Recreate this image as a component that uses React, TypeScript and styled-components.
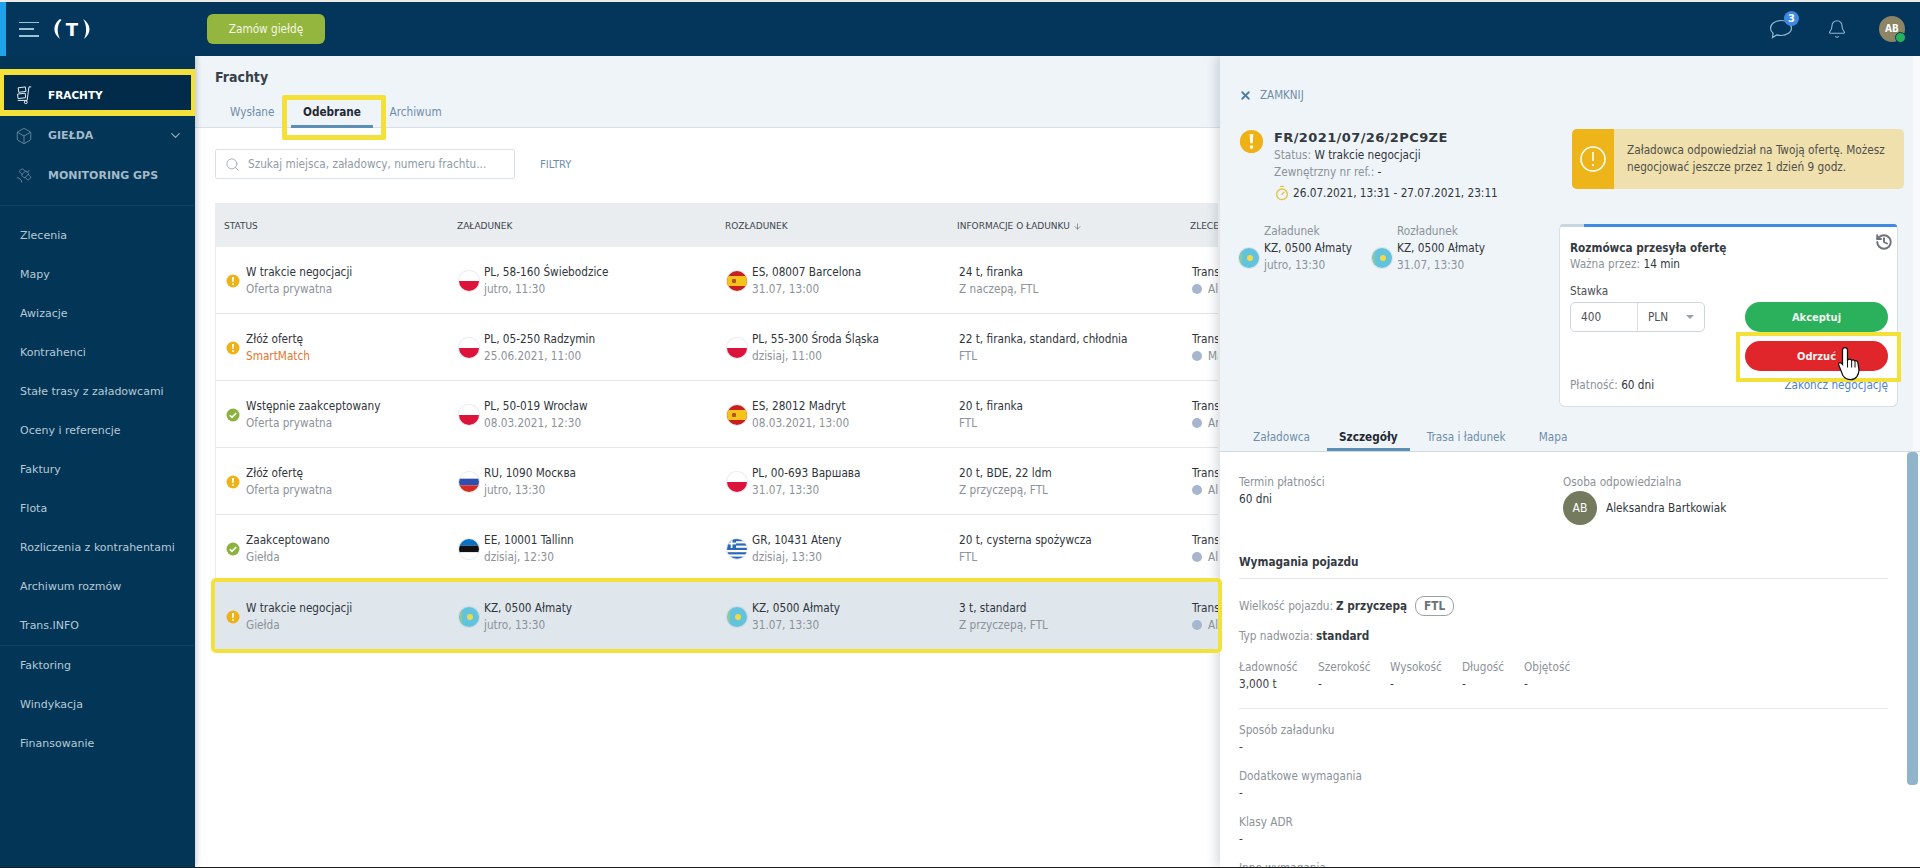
import React from "react";
import styled, { createGlobalStyle } from "styled-components";
import { Box, ChevronDown, Satellite, Search, ArrowDown, X, Timer, History, Bell } from "lucide-react";

const Global = createGlobalStyle`
  html, body { margin: 0; padding: 0; background: #fff; }
  * { box-sizing: border-box; }
  body { font-family: "DejaVu Sans", Verdana, sans-serif; font-size: 11px; color: #3a4046; }
`;

const Root = styled.div`
  width: 1920px; height: 868px; overflow: hidden; display: flex; flex-direction: column;
  border-top: 2px solid #ece9e6; border-bottom: 1px solid #1c1c1c; background: #fff;
`;
const TopBar = styled.header`
  height: 54px; flex: none; background: #03365a; display: flex; align-items: center; position: relative; z-index: 6;
`;
const BrandStrip = styled.div`width: 6px; height: 100%; background: #1ea3ea;`;
const Burger = styled.div`
  margin-left: 13px; width: 20px; height: 15px; display: flex; flex-direction: column; justify-content: space-between;
`;
const BurgerLine = styled.i<{ $w: number }>`display: block; height: 1.5px; width: ${p => p.$w}px; background: #9cc2d8;`;
const Logo = styled.svg`margin-left: 13px; width: 40px; height: 24px; flex: none;`;
const OrderButton = styled.button`
  margin-left: 115px; width: 118px; height: 30px; border: 0; border-radius: 6px; background: #95b63e; color: #f3f7e6;
  font: 400 11.7px "DejaVu Sans", sans-serif; font-stretch: condensed;
`;
const TopActions = styled.div`margin-left: auto; display: flex; align-items: center; padding-right: 15px;`;
const IconHolder = styled.div<{ $mr: number }>`position: relative; display: flex; margin-right: ${p => p.$mr}px; color: #8fb9d2;`;
const Badge = styled.span`
  position: absolute; top: -8px; right: -6px; width: 15px; height: 15px; border-radius: 50%; background: #3e8ae2; color: #fff;
  font: 700 10px/15px "DejaVu Sans", sans-serif; text-align: center;
`;
const UserAvatar = styled.div`
  position: relative; width: 26px; height: 26px; border-radius: 50%; background: #8d8563; color: #fff;
  font: 700 10px/26px "DejaVu Sans", sans-serif; font-stretch: condensed; text-align: center;
`;
const OnlineDot = styled.span`
  position: absolute; right: -1px; bottom: -1px; width: 11px; height: 11px; border-radius: 50%; background: #25b25c; border: 1.5px solid #03365a;
`;

const Body = styled.div`flex: 1; display: flex; min-height: 0;`;
const Sidebar = styled.nav`
  width: 195px; flex: none; background: #033656; padding-top: 13px; box-shadow: 2px 0 5px rgba(30,50,70,.22); position: relative; z-index: 5;
`;
const ActiveItem = styled.div`
  height: 47px; border: 6px solid #f3e13a; border-left-width: 4px; border-right-width: 4px; background: #022b49; display: flex; align-items: center;
  padding: 5px 0 0 11px; color: #fff; font-weight: 700; font-size: 10.5px; gap: 15px; position: relative;
`;
const MainItem = styled.div<{ $h: number }>`
  height: ${p => p.$h}px; display: flex; align-items: center; padding-left: 15px; color: #a4bac9; font-weight: 700; font-size: 11px; gap: 15px;
`;
const MainIcon = styled.span`display: flex; width: 18px; flex: none; justify-content: center;`;
const Chevron = styled.span`margin-left: auto; margin-right: 12px; display: flex;`;
const Divider = styled.hr<{ $mt?: number }>`margin: ${p => p.$mt ?? 0}px 0 0; border: 0; border-top: 1px solid #0d4266;`;
const SubList = styled.div<{ $pt: number }>`padding-top: ${p => p.$pt}px;`;
const SubItem = styled.div`height: 39px; line-height: 39px; padding-left: 20px; color: #b7c9d6; font-size: 11px; font-weight: 500;`;

const Main = styled.main`flex: 1; position: relative; min-width: 0; background: #fff;`;
const Head = styled.div`height: 72px; background: #eff4f8; border-bottom: 1px solid #d8e0e6; padding: 11px 0 0 20px; display: flex; flex-direction: column;`;
const PageTitle = styled.h1`margin: 0; font-size: 14px; line-height: 21px; font-weight: 700; color: #39404a; font-stretch: condensed;`;
const Tabs = styled.div<{ $gap: number }>`display: flex; gap: ${p => p.$gap}px;`;
const PageTabs = styled(Tabs)`margin: 11px 0 0 3px;`;
const Tab = styled.div<{ $active?: boolean; $h: number; $lh: number; $ml?: number }>`
  position: relative; flex: none; height: ${p => p.$h}px; padding: 0 12px; margin-left: ${p => p.$ml ?? 0}px; line-height: ${p => p.$lh}px; font-size: 11.7px; font-stretch: condensed;
  color: ${p => (p.$active ? "#1f2a33" : "#6f8eab")}; font-weight: ${p => (p.$active ? 700 : 400)};
  border-bottom: 3px solid ${p => (p.$active ? "#5b8fb5" : "transparent")};
`;
const TabFrame = styled.span`
  position: absolute; top: -4px; left: -9px; right: -13px; bottom: -15px; border: 5px solid #f3e13a; border-radius: 2px;
`;
const FilterRow = styled.div`display: flex; align-items: center; padding: 21px 0 0 20px;`;
const SearchBox = styled.div`
  width: 300px; height: 30px; background: #fff; border: 1px solid #d9e0e6; border-radius: 2px; display: flex; align-items: center; padding-left: 9px; gap: 8px;
  color: #8f9ca6; font-size: 11.7px; font-stretch: condensed; white-space: nowrap;
`;
const FilterLink = styled.span`margin-left: 25px; color: #6d8fae; font-size: 10px;`;

const Table = styled.div`width: 1003px; margin: 24px 0 0 20px;`;
const TableRow = styled.div`
  display: grid; grid-template-columns: 233px 268px 232px 233px 31px; padding-left: 9px; overflow: hidden;
`;
const TableHead = styled(TableRow)`height: 44px; padding-top: 2px; background: #e9edf0; align-items: center; font-size: 9px; color: #3f464d;`;
const HeadCell = styled.div`white-space: nowrap; display: flex; align-items: center; gap: 3px;`;
const DataRow = styled(TableRow)<{ $selected?: boolean }>`
  height: 67px; padding-top: 2px; align-items: center; border-left: 1px solid #e8ecef; border-bottom: 1px solid #e3e7ea; position: relative;
  ${p => p.$selected ? `padding-top: 4px; background: #dfe6ec; outline: 4px solid #f3e13a; outline-offset: 0; border-radius: 1px; z-index: 3; border-color: transparent;` : ""}
`;
const Cell = styled.div<{ $gap: number; $ml?: number }>`
  display: flex; align-items: center; gap: ${p => p.$gap}px; margin-left: ${p => p.$ml ?? 0}px; white-space: nowrap; min-width: 0;
`;
const Lines = styled.div`display: flex; flex-direction: column; line-height: 17px; font-size: 11.7px; font-stretch: condensed;`;
const Sub = styled.span<{ $accent?: boolean }>`color: ${p => (p.$accent ? "#e2762e" : "#8b9298")};`;
const Strong = styled.span`color: #2f353b;`;
const Dot = styled.i`width: 10px; height: 10px; border-radius: 50%; background: #a7b6cf; display: inline-block; margin-right: 6px; vertical-align: -1px;`;
const FlagWrap = styled.span`width: 20px; height: 20px; border-radius: 50%; overflow: hidden; flex: none; display: block; box-shadow: 0 0 0 1px rgba(170,180,190,.25);`;

const Drawer = styled.aside`
  position: absolute; left: 1025px; top: 0; bottom: 0; width: 700px; display: flex; flex-direction: column; box-shadow: -4px 0 10px rgba(60,80,100,.2); z-index: 2; background: #fff;
`;
const DrawerTop = styled.div`
  height: 396px; flex: none; background: #eff4f8; border-bottom: 1px solid #cfdae2; display: flex; flex-direction: column; position: relative;
  &::after { content: ""; position: absolute; top: 0; right: 0; bottom: 0; width: 7px; background: #f7f9fb; }
`;
const DrawerGrid = styled.div`display: grid; grid-template-columns: 339px 339px; flex: 1;`;
const DrawerLeft = styled.div`padding: 31px 0 0 19px; font-stretch: condensed;`;
const DrawerRight = styled.div`padding-top: 73px;`;
const CloseRow = styled.div`height: 16px; display: flex; align-items: center; gap: 8px; color: #6f8fa8; font-size: 11.5px;`;
const FreightHead = styled.div`display: flex; gap: 10px; margin-top: 26px;`;
const FreightInfo = styled.div`display: flex; flex-direction: column; line-height: 17px; font-size: 11.7px; font-stretch: condensed; white-space: nowrap;`;
const FreightNo = styled.div`font-weight: 700; font-size: 13px; line-height: 18px; color: #33393f; letter-spacing: .4px; font-stretch: normal;`;
const DateRow = styled.div`display: flex; align-items: center; gap: 3px; margin-top: 3px; height: 18px;`;
const Route = styled.div`display: grid; grid-template-columns: 133px 134px; margin-top: 21px;`;
const RouteCell = styled.div`display: flex; align-items: flex-end; gap: 5px; white-space: nowrap;`;
const RouteFlag = styled.div`margin-bottom: 6px;`;

const Alert = styled.div`
  width: 332px; height: 60px; margin-left: 13px; border-radius: 5px; overflow: hidden; background: #efe0ae; display: flex; align-items: center; font-size: 11.7px; line-height: 17px; font-stretch: condensed; color: #50504a; white-space: nowrap;
`;
const AlertIcon = styled.div`width: 42px; height: 100%; background: #edb519; display: flex; align-items: center; justify-content: center; margin-right: 13px; color: #fff; flex: none;`;
const Card = styled.div`
  width: 339px; height: 183px; margin-top: 35px; background: #fff; border: 1px solid #d6dfe6; border-top: 0; border-radius: 6px; position: relative; font-size: 11.7px; font-stretch: condensed;
`;
const Progress = styled.div`height: 3px; background: #c8d6e2; border-radius: 3px 3px 0 0; overflow: hidden;`;
const ProgressFill = styled.div`height: 100%; background: #3f8ae2; margin-left: 24px;`;
const CardBody = styled.div`padding: 13px 9px 0 10px; line-height: 17px; white-space: nowrap;`;
const CardTitle = styled.div`font-weight: 700; color: #353b41; margin-bottom: -1px;`;
const HistoryIcon = styled.span`position: absolute; top: 9px; right: 4px; color: #6d7378; display: flex;`;
const RateLabel = styled.div`margin-top: 10px; color: #494f55;`;
const RateRow = styled.div`display: flex; justify-content: space-between; margin-top: 2px;`;
const RateInput = styled.div`width: 135px; height: 30px; border: 1px solid #ccd6de; border-radius: 5px; display: flex; align-items: center; color: #4b5157;`;
const RateValue = styled.div`width: 67px; height: 100%; border-right: 1px solid #d7dfe5; padding-left: 10px; line-height: 28px;`;
const RateUnit = styled.div`padding-left: 10px; flex: 1; display: flex; align-items: center; justify-content: space-between; padding-right: 10px;`;
const Caret = styled.i`border: 4px solid transparent; border-top: 4px solid #9aa2a8; border-bottom: 0; display: block;`;
const Buttons = styled.div`width: 143px; display: flex; flex-direction: column; gap: 9px;`;
const Pill = styled.button<{ $bg: string }>`
  position: relative; height: 30px; width: 100%; border: 0; border-radius: 15px; background: ${p => p.$bg}; color: #f2f7f2; font: 700 11px "DejaVu Sans", sans-serif; font-stretch: condensed;
`;
const PillFrame = styled.span`position: absolute; top: -9px; left: -9px; right: -13px; bottom: -11px; border: 4px solid #f3e13a; pointer-events: none; z-index: 2;`;
const Hand = styled.svg`position: absolute; left: 90px; top: 4px; width: 30px; height: 37.5px; z-index: 3;`;
const CardFoot = styled.div`display: flex; justify-content: space-between; margin-top: 6px;`;
const FootLink = styled.span`color: #4d80c9;`;

const DetailTabs = styled(Tabs)`height: 30px; padding-left: 21px;`;
const Details = styled.div`flex: 1; position: relative; padding: 22px 0 0 19px; overflow: hidden; font-size: 11.7px; font-stretch: condensed; line-height: 17px;`;
const Scroll = styled.i`position: absolute; right: 2px; top: 0; width: 11px; height: 333px; border-radius: 4px; background: #90b4ca;`;
const TwoCols = styled.div`display: grid; grid-template-columns: 324px 300px; height: 52px;`;
const Label = styled.div`color: #8b9298;`;
const PersonRow = styled.div`display: flex; align-items: center; gap: 9px;`;
const PersonAvatar = styled.div`width: 34px; height: 34px; border-radius: 50%; background: #737a5d; color: #fff; text-align: center; line-height: 34px; font-size: 12px;`;
const SectionTitle = styled.div`margin-top: 28px; font-weight: 700; color: #353b41;`;
const Rule = styled.hr<{ $mt: number }>`width: 649px; margin: ${p => p.$mt}px 0 0; border: 0; border-top: 1px solid #e4e8eb;`;
const SpecRow = styled.div<{ $mt: number }>`display: flex; align-items: center; gap: 3px; min-height: 17px; margin-top: ${p => p.$mt}px;`;
const SpecValue = styled.b`color: #353b41;`;
const FtlPill = styled.span`margin-left: 5px; width: 39px; height: 20px; border: 1px solid #9aa2a8; border-radius: 9px; text-align: center; line-height: 18px; color: #6a7177; font-weight: 700;`;
const Dims = styled.div`display: grid; grid-template-columns: 79px 72px 72px 62px 80px; margin-top: 14px;`;
const Field = styled.div<{ $mt: number }>`margin-top: ${p => p.$mt}px;`;

const Flag = ({ c }: { c: string }) => {
  const stripes: Record<string, string[]> = {
    PL: ["#fff", "#fff", "#dc143c", "#dc143c"],
    RU: ["#fff", "#2c4fb0", "#d52b1e"],
    EE: ["#0a72c4", "#111", "#fff"],
  };
  return (
    <FlagWrap>
      <svg viewBox="0 0 20 20" width="20" height="20">
        {c === "ES" && (<>
          <rect width="20" height="20" fill="#c8201f" />
          <rect y="5" width="20" height="10" fill="#f6c21c" />
          <rect x="5" y="8" width="4" height="4" rx="1" fill="#b5502b" />
        </>)}
        {c === "KZ" && (<>
          <rect width="20" height="20" fill="#62c3dc" />
          <circle cx="11" cy="10" r="3" fill="#f0d94a" />
          <rect x="1" y="3" width="2" height="14" fill="#8ec79a" />
        </>)}
        {c === "GR" && (<>
          <rect width="20" height="20" fill="#fff" />
          {[0, 4.4, 8.8, 13.2, 17.6].map(y => <rect key={y} y={y} width="20" height="2.2" fill="#2a69b5" />)}
          <rect width="9" height="9" fill="#2a69b5" />
          <rect x="3.7" width="1.8" height="9" fill="#fff" />
          <rect y="3.6" width="9" height="1.8" fill="#fff" />
        </>)}
        {stripes[c]?.map((f, i, a) => <rect key={i} y={(20 / a.length) * i} width="20" height={20 / a.length} fill={f} />)}
      </svg>
    </FlagWrap>
  );
};

const StatusIcon = ({ ok, size = 14 }: { ok?: boolean; size?: number }) => (
  <svg viewBox="0 0 14 14" width={size} height={size} style={{ flex: "none" }}>
    <circle cx="7" cy="7" r="6.5" fill={ok ? "#8cb23e" : "#efb216"} />
    {ok ? <path d="M3.8 7.2l2.2 2.2 4.2-4.400" fill="none" stroke="#fff" strokeWidth="1.6" />
      : <path d="M6 3h2l-.3 5H6.300zM6.200 9.200h1.600v1.700H6.200z" fill="#fff" />}
  </svg>
);

type RowData = {
  s: string; sub: string; ok?: boolean; accent?: boolean;
  f1: string; a1: string; d1: string; f2: string; a2: string; d2: string;
  i1: string; i2: string; p: string; selected?: boolean;
};
const rows: RowData[] = [
  { s: "W trakcie negocjacji", sub: "Oferta prywatna", f1: "PL", a1: "PL, 58-160 Świebodzice", d1: "jutro, 11:30", f2: "ES", a2: "ES, 08007 Barcelona", d2: "31.07, 13:00", i1: "24 t, firanka", i2: "Z naczepą, FTL", p: "Ale" },
  { s: "Złóż ofertę", sub: "SmartMatch", accent: true, f1: "PL", a1: "PL, 05-250 Radzymin", d1: "25.06.2021, 11:00", f2: "PL", a2: "PL, 55-300 Środa Śląska", d2: "dzisiaj, 11:00", i1: "22 t, firanka, standard, chłodnia", i2: "FTL", p: "Ma" },
  { s: "Wstępnie zaakceptowany", sub: "Oferta prywatna", ok: true, f1: "PL", a1: "PL, 50-019 Wrocław", d1: "08.03.2021, 12:30", f2: "ES", a2: "ES, 28012 Madryt", d2: "08.03.2021, 13:00", i1: "20 t, firanka", i2: "FTL", p: "An" },
  { s: "Złóż ofertę", sub: "Oferta prywatna", f1: "RU", a1: "RU, 1090 Москва", d1: "jutro, 13:30", f2: "PL", a2: "PL, 00-693 Варшава", d2: "31.07, 13:30", i1: "20 t, BDE, 22 ldm", i2: "Z przyczepą, FTL", p: "Ale" },
  { s: "Zaakceptowano", sub: "Giełda", ok: true, f1: "EE", a1: "EE, 10001 Tallinn", d1: "dzisiaj, 12:30", f2: "GR", a2: "GR, 10431 Ateny", d2: "dzisiaj, 13:30", i1: "20 t, cysterna spożywcza", i2: "FTL", p: "Ale" },
  { s: "W trakcie negocjacji", sub: "Giełda", selected: true, f1: "KZ", a1: "KZ, 0500 Ałmaty", d1: "jutro, 13:30", f2: "KZ", a2: "KZ, 0500 Ałmaty", d2: "31.07, 13:30", i1: "3 t, standard", i2: "Z przyczepą, FTL", p: "Ale" },
];
const menuA = ["Zlecenia", "Mapy", "Awizacje", "Kontrahenci", "Stałe trasy z załadowcami", "Oceny i referencje", "Faktury", "Flota", "Rozliczenia z kontrahentami", "Archiwum rozmów", "Trans.INFO"];
const menuB = ["Faktoring", "Windykacja", "Finansowanie"];
const iconC = "#8ea6b7";

export default function App() {
  return (
    <Root>
      <Global />
      <TopBar>
        <BrandStrip />
        <Burger><BurgerLine $w={20} /><BurgerLine $w={15} /><BurgerLine $w={20} /></Burger>
        <Logo viewBox="0 0 40 24">
          <path d="M8 2C1 7 0 16 8 22 5 16 4.500 8 9.500 3z" fill="#fff" />
          <path d="M31 2c8 5 9 14 1 20 3-6 3-14-1-20z" fill="#fff" />
          <text x="20" y="18.500" textAnchor="middle" fontFamily="DejaVu Sans" fontWeight="700" fontSize="18" fill="#fff">T</text>
        </Logo>
        <OrderButton>Zamów giełdę</OrderButton>
        <TopActions>
          <IconHolder $mr={34}>
            <svg width="24" height="20" viewBox="0 0 24 20" fill="none" stroke="currentColor" strokeWidth="1.2">
              <path d="M12 1.500c5.800 0 10.500 3.200 10.500 7.500s-4.700 7.500-10.500 7.500c-1.500 0-3-.2-4.300-.6L3.500 18.500l.6-4.300C2.500 12.900 1.500 11 1.500 9c0-4.300 4.700-7.500 10.500-7.500z" />
            </svg>
            <Badge>3</Badge>
          </IconHolder>
          <IconHolder $mr={32}><Bell size={20} strokeWidth={1.3} /></IconHolder>
          <UserAvatar>AB<OnlineDot /></UserAvatar>
        </TopActions>
      </TopBar>
      <Body>
        <Sidebar>
          <ActiveItem>
            <MainIcon>
              <svg width="20" height="22" viewBox="0 0 20 22" fill="none" stroke="#e8eef2" strokeWidth="1.1">
                <path d="M18 2h-2.500L13.500 17H3" /><circle cx="12" cy="19" r="1.600" />
                <path d="M3.500 3l8-1 .7 5-8 1zM2.800 10l8.500-1 .6 5-8.500 1z" />
              </svg>
            </MainIcon>
            FRACHTY
          </ActiveItem>
          <MainItem $h={39}>
            <MainIcon><Box size={24} strokeWidth={.9} color={iconC} /></MainIcon>GIEŁDA
            <Chevron><ChevronDown size={15} color={iconC} /></Chevron>
          </MainItem>
          <MainItem $h={40}>
            <MainIcon><Satellite size={23} strokeWidth={.9} color={iconC} /></MainIcon>MONITORING GPS
          </MainItem>
          <Divider $mt={10} />
          <SubList $pt={10}>{menuA.map(m => <SubItem key={m}>{m}</SubItem>)}</SubList>
          <Divider />
          <SubList $pt={0}>{menuB.map(m => <SubItem key={m}>{m}</SubItem>)}</SubList>
        </Sidebar>
        <Main>
          <Head>
            <PageTitle>Frachty</PageTitle>
            <PageTabs $gap={4.5}>
              <Tab $h={29} $lh={26}>Wysłane</Tab>
              <Tab $h={29} $lh={26} $active>Odebrane<TabFrame /></Tab>
              <Tab $h={29} $lh={26}>Archiwum</Tab>
            </PageTabs>
          </Head>
          <FilterRow>
            <SearchBox><Search size={15} strokeWidth={1.2} color="#8e9aa5" />Szukaj miejsca, załadowcy, numeru frachtu...</SearchBox>
            <FilterLink>FILTRY</FilterLink>
          </FilterRow>
          <Table>
            <TableHead>
              <HeadCell>STATUS</HeadCell>
              <HeadCell>ZAŁADUNEK</HeadCell>
              <HeadCell>ROZŁADUNEK</HeadCell>
              <HeadCell>INFORMACJE O ŁADUNKU <ArrowDown size={9} strokeWidth={1.4} /></HeadCell>
              <HeadCell>ZLECE</HeadCell>
            </TableHead>
            {rows.map((r, i) => (
              <DataRow key={i} $selected={r.selected}>
                <Cell $gap={6} $ml={1}>
                  <StatusIcon ok={r.ok} />
                  <Lines><Strong>{r.s}</Strong><Sub $accent={r.accent}>{r.sub}</Sub></Lines>
                </Cell>
                <Cell $gap={5} $ml={1}>
                  <Flag c={r.f1} />
                  <Lines><Strong>{r.a1}</Strong><Sub>{r.d1}</Sub></Lines>
                </Cell>
                <Cell $gap={5} $ml={1}>
                  <Flag c={r.f2} />
                  <Lines><Strong>{r.a2}</Strong><Sub>{r.d2}</Sub></Lines>
                </Cell>
                <Cell $gap={0} $ml={1}>
                  <Lines><Strong>{r.i1}</Strong><Sub>{r.i2}</Sub></Lines>
                </Cell>
                <Cell $gap={0} $ml={1}>
                  <Lines><Strong>Trans</Strong><Sub><Dot />{r.p}</Sub></Lines>
                </Cell>
              </DataRow>
            ))}
          </Table>
          <Drawer>
            <DrawerTop>
              <DrawerGrid>
                <DrawerLeft>
                  <CloseRow><X size={13} strokeWidth={3.5} color="#4e7fa3" />ZAMKNIJ</CloseRow>
                  <FreightHead>
                    <StatusIcon size={25} />
                    <FreightInfo>
                      <FreightNo>FR/2021/07/26/2PC9ZE</FreightNo>
                      <div><Sub>Status: </Sub><Strong>W trakcie negocjacji</Strong></div>
                      <div><Sub>Zewnętrzny nr ref.: </Sub><Strong>-</Strong></div>
                      <DateRow><Timer size={16} strokeWidth={2} color="#e2c437" /><Strong>26.07.2021, 13:31 - 27.07.2021, 23:11</Strong></DateRow>
                    </FreightInfo>
                  </FreightHead>
                  <Route>
                    <RouteCell>
                      <RouteFlag><Flag c="KZ" /></RouteFlag>
                      <Lines><Sub>Załadunek</Sub><Strong>KZ, 0500 Ałmaty</Strong><Sub>jutro, 13:30</Sub></Lines>
                    </RouteCell>
                    <RouteCell>
                      <RouteFlag><Flag c="KZ" /></RouteFlag>
                      <Lines><Sub>Rozładunek</Sub><Strong>KZ, 0500 Ałmaty</Strong><Sub>31.07, 13:30</Sub></Lines>
                    </RouteCell>
                  </Route>
                </DrawerLeft>
                <DrawerRight>
                  <Alert>
                    <AlertIcon>
                      <svg width="28" height="28" viewBox="0 0 28 28" fill="none" stroke="#fff" strokeWidth="1.6">
                        <circle cx="14" cy="14" r="12" /><path d="M14 7v9M14 19v2" />
                      </svg>
                    </AlertIcon>
                    <div>Załadowca odpowiedział na Twoją ofertę. Możesz<br />negocjować jeszcze przez 1 dzień 9 godz.</div>
                  </Alert>
                  <Card>
                    <Progress><ProgressFill /></Progress>
                    <HistoryIcon><History size={18} strokeWidth={2.6} /></HistoryIcon>
                    <CardBody>
                      <CardTitle>Rozmówca przesyła ofertę</CardTitle>
                      <div><Sub>Ważna przez: </Sub><Strong>14 min</Strong></div>
                      <RateLabel>Stawka</RateLabel>
                      <RateRow>
                        <RateInput>
                          <RateValue>400</RateValue>
                          <RateUnit>PLN<Caret /></RateUnit>
                        </RateInput>
                        <Buttons>
                          <Pill $bg="#2bb05b">Akceptuj</Pill>
                          <Pill $bg="#e0262b">
                            Odrzuć
                            <PillFrame />
                            <Hand viewBox="0 0 24 30">
                              <path d="M8 2c1.200 0 2 .8 2 2v8l1-.5c1-.4 2 0 2.300.8.800-.6 2-.4 2.500.5.900-.5 2-.1 2.400.9l1 6c0 4-2.500 8-6.500 8-3 0-5-1-6.500-3.500L3 16c-.6-1 .4-2.500 2-1.500L6 15.500V4c0-1.200.8-2 2-2z" fill="#fff" stroke="#111" strokeWidth="1" />
                              <path d="M10 12v6M13.300 12.300V18M16 13v5" stroke="#111" strokeWidth=".8" />
                            </Hand>
                          </Pill>
                        </Buttons>
                      </RateRow>
                      <CardFoot>
                        <div><Sub>Płatność: </Sub><Strong>60 dni</Strong></div>
                        <FootLink>Zakończ negocjację</FootLink>
                      </CardFoot>
                    </CardBody>
                  </Card>
                </DrawerRight>
              </DrawerGrid>
              <DetailTabs $gap={5}>
                <Tab $h={30} $lh={33}>Załadowca</Tab>
                <Tab $h={30} $lh={33} $active>Szczegóły</Tab>
                <Tab $h={30} $lh={33}>Trasa i ładunek</Tab>
                <Tab $h={30} $lh={33} $ml={4}>Mapa</Tab>
              </DetailTabs>
            </DrawerTop>
            <Details>
              <Scroll />
              <TwoCols>
                <div><Label>Termin płatności</Label><Strong>60 dni</Strong></div>
                <div>
                  <Label>Osoba odpowiedzialna</Label>
                  <PersonRow><PersonAvatar>AB</PersonAvatar><Strong>Aleksandra Bartkowiak</Strong></PersonRow>
                </div>
              </TwoCols>
              <SectionTitle>Wymagania pojazdu</SectionTitle>
              <Rule $mt={7} />
              <SpecRow $mt={17}><Label>Wielkość pojazdu:</Label><SpecValue>Z przyczepą</SpecValue><FtlPill>FTL</FtlPill></SpecRow>
              <SpecRow $mt={12}><Label>Typ nadwozia:</Label><SpecValue>standard</SpecValue></SpecRow>
              <Dims>
                <div><Label>Ładowność</Label>3,000 t</div>
                <div><Label>Szerokość</Label>-</div>
                <div><Label>Wysokość</Label>-</div>
                <div><Label>Długość</Label>-</div>
                <div><Label>Objętość</Label>-</div>
              </Dims>
              <Rule $mt={15} />
              <Field $mt={13}><Label>Sposób załadunku</Label>-</Field>
              <Field $mt={12}><Label>Dodatkowe wymagania</Label>-</Field>
              <Field $mt={12}><Label>Klasy ADR</Label>-</Field>
              <Field $mt={12}><Label>Inne wymagania</Label>-</Field>
            </Details>
          </Drawer>
        </Main>
      </Body>
    </Root>
  );
}
